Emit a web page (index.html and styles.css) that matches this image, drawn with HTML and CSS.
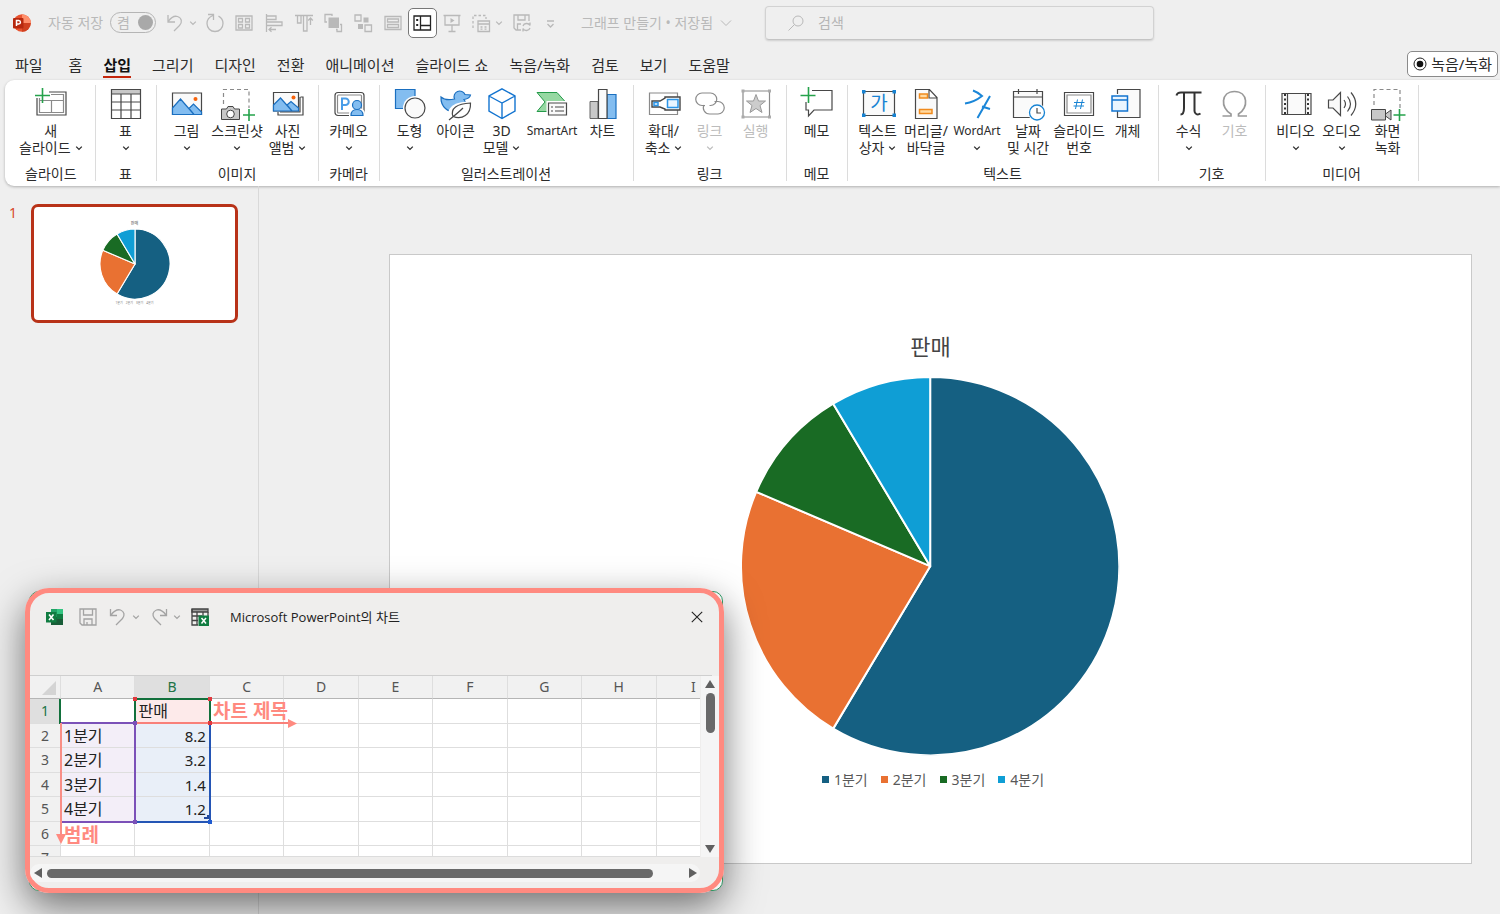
FILE: index.html
```html
<!DOCTYPE html>
<html lang="ko">
<head>
<meta charset="utf-8">
<meta name="viewport" content="width=device-width, initial-scale=1">
<title>그래프 만들기</title>
<link rel="stylesheet" href="styles.css">
</head>
<body>
<svg class="defs" aria-hidden="true">
  <symbol id="chev" viewBox="0 0 8 8"><path d="M1.2 2.6 4 5.4 6.800 2.600" fill="none" stroke="currentColor" stroke-width="1.3"/></symbol>
  <symbol id="pie" viewBox="-189 -189 378 378">
    <g stroke="#fff" stroke-linejoin="round">
      <path fill="#156082" d="M0 0V-189A189 189 0 1 1-96.900 162.300Z"/>
      <path fill="#e97132" d="M0 0-96.900 162.300A189 189 0 0 1-173.800-74.300Z"/>
      <path fill="#196b24" d="M0 0-173.800-74.300A189 189 0 0 1-96.900-162.300Z"/>
      <path fill="#0f9ed5" d="M0 0-96.900-162.300A189 189 0 0 1 0-189Z"/>
    </g>
  </symbol>
</svg>

<header class="titlebar">
  <svg class="app-logo" viewBox="0 0 20 20" aria-hidden="true">
    <circle cx="11" cy="10" r="8.800" fill="#e8532f"/><path d="M11 1.200A8.800 8.800 0 0 1 19.800 10H11Z" fill="#ff8f6b"/><path d="M11 18.800A8.800 8.800 0 0 0 19.800 10H11Z" fill="#d0401f"/>
    <rect x="2" y="5" width="10.500" height="10.500" rx="1" fill="#b7280e"/><path d="M5.500 13V7.400h2.200a1.700 1.700 0 0 1 0 3.500H5.800" fill="none" stroke="#fff" stroke-width="1.500"/>
  </svg>
  <span class="autosave" id="autosave">자동 저장</span>
  <button class="toggle" role="switch" aria-checked="true" aria-labelledby="autosave"><span>켬</span><i class="knob"></i></button>
  <div class="quick">
    <button class="qb" aria-label="실행 취소"><svg viewBox="0 0 20 20"><path d="M3 2v7h7M3.300 8.500C6 4.500 9 2.500 12.500 3.500c4.500 1.500 5 6 2 9L9 18"/></svg></button>
    <button class="qc" aria-label="실행 취소 목록"><svg viewBox="0 0 8 8"><use href="#chev"/></svg></button>
  </div>
  <div class="quick quick-main">
    <button class="qb" aria-label="다시 실행"><svg viewBox="0 0 20 20"><path d="M3 1.500h5.500V7M8 2.500C4 4 2 7 2 10.500c0 4.500 3.500 8 8 8s8-3.500 8-8c0-3.500-2-6-4.500-7.300"/></svg></button>
    <button class="qb" aria-label="표"><svg viewBox="0 0 20 20"><path d="M2 3h16v14H2zM4.500 5.500h4v3.500h-4zM11.500 5.500h4v3.500h-4zM4.500 11.500h4V15h-4zM11.500 11.500h4V15h-4z"/></svg></button>
    <button class="qb" aria-label="왼쪽 맞춤"><svg viewBox="0 0 20 20"><path d="M2.500 1v18M3 3h9v3.500H3M3 9h15v3.500H3M12 16.500H5m2.500-2.300L5 16.500l2.500 2.300"/></svg></button>
    <button class="qb" aria-label="위쪽 맞춤"><svg viewBox="0 0 20 20"><path d="M1 2.500h18M3.500 3v7h3.500V3M9.500 3v15h3.500V3M16.500 12V5m-2.300 2.500L16.500 5l2.300 2.500"/></svg></button>
    <button class="qb" aria-label="맨 앞으로"><svg viewBox="0 0 20 20"><path d="M9 3V1.500H2V9h2M13 16.500h1v2h4.500v-7H17"/><path class="f" d="M5.500 4.500h10.500v10.500H5.500z"/></svg></button>
    <button class="qb" aria-label="그룹"><svg viewBox="0 0 20 20"><path d="M2 2h6v6H2zM12 12h6.500v6.500H12z"/><path class="f" d="M10.500 4.500h5v5h-5zM5 11h5v5H5z"/></svg></button>
    <button class="qb" aria-label="레이아웃"><svg viewBox="0 0 20 20"><path d="M2 3.500h16v13H2z"/><path d="M4.500 6h11v3h-11zM4.500 11.500h11v3h-11z"/></svg></button>
    <button class="qb on" aria-label="기본 보기"><svg viewBox="0 0 20 20"><path d="M2 3h16.500v14H2zM8.500 3v14M8.500 12.500h10" /><path class="f" d="M4.200 6h2v2h-2zM4.200 11h2v2h-2z"/></svg></button>
  </div>
  <div class="quick">
    <button class="qb" aria-label="슬라이드 쇼"><svg viewBox="0 0 20 20"><path d="M1.500 2.500h17M3 3v9h14V3M10 12v6M6.500 18.500h7"/><path class="f" d="M8.500 5l4 2.500-4 2.500z"/></svg></button>
    <button class="qb" aria-label="선택 창"><svg viewBox="0 0 20 20"><path d="M2 15V2.500h13V6" stroke-dasharray="2.500 2"/><path d="M7 8h11.500v10.500H7zM7 11h11.500M9.500 14h2m2 0h2m-6 2.200h2m2 0h2"/></svg></button>
    <button class="qc" aria-label="선택 목록"><svg viewBox="0 0 8 8"><use href="#chev"/></svg></button>
    <button class="qb save" aria-label="저장"><svg viewBox="0 0 20 20"><path d="M9 17H4L2 15V2h15v6M6 2v5h7V2M5.500 17v-6H9M11 13c1-3 5.500-3.500 7-.5V9.500M18 15c-1 3-5.500 3.500-7 .5V18.500"/></svg></button>
    <button class="qb" aria-label="빠른 실행 도구 모음 사용자 지정"><svg viewBox="0 0 20 20"><path d="M6 8h7M6.500 11l3 3 3-3"/></svg></button>
  </div>
  <button class="doc-name">그래프 만들기 • 저장됨 <svg viewBox="0 0 12 12"><path d="M1 3.500 6 8.500 11 3.500" fill="none" stroke="currentColor"/></svg></button>
  <label class="search">
    <svg viewBox="0 0 18 18" aria-hidden="true"><circle cx="11" cy="7" r="5" fill="none" stroke="currentColor"/><path d="M7.500 10.500 1.500 16.500" stroke="currentColor"/></svg>
    <input type="search" placeholder="검색" aria-label="검색">
  </label>
</header>

<nav class="tabs">
  <button class="tab first">파일</button><button class="tab">홈</button><button class="tab active">삽입</button><button class="tab">그리기</button><button class="tab">디자인</button><button class="tab">전환</button><button class="tab">애니메이션</button><button class="tab">슬라이드 쇼</button><button class="tab">녹음/녹화</button><button class="tab">검토</button><button class="tab">보기</button><button class="tab">도움말</button>
  <button class="record"><svg viewBox="0 0 14 14" aria-hidden="true"><circle cx="7" cy="7" r="6" fill="none" stroke="#222"/><circle cx="7" cy="7" r="3.300" fill="#111"/></svg>녹음/녹화</button>
</nav>

<div class="ribbon">
  <section class="group"><div class="tools">
    <button class="tool"><svg viewBox="0 0 32 32"><path d="M2 10v17h29V4H14" class="k"/><path d="M4.500 10v14.500h24v-18H16M4.500 12.500h24M16.500 12.500v12" class="g"/><path d="M7.500 0v15M0 7.500h15" class="plus"/></svg><span>새</span><span>슬라이드 <svg class="c"><use href="#chev"/></svg></span></button>
  </div><h2>슬라이드</h2></section>

  <section class="group"><div class="tools">
    <button class="tool"><svg viewBox="0 0 32 32"><path d="M1.500 1.500h29V6h-29z" fill="#c8c8c8"/><path d="M1.500 1.500h29v29h-29zM1.500 6h29M11 6v24.500M21 6v24.500M1.500 14h29M1.500 22h29" class="k"/></svg><span>표</span><span><svg class="c"><use href="#chev"/></svg></span></button>
  </div><h2>표</h2></section>

  <section class="group"><div class="tools">
    <button class="tool"><svg viewBox="0 0 32 32"><path d="M1.500 5h29v21.500h-29z" class="k p"/><path d="M1.500 20 9.500 11 23 26.500H1.500zM18 20.500l4.500-4.500 8 8v2.500H23z" class="b"/><circle cx="24.500" cy="11" r="2" fill="#f7630c"/></svg><span>그림</span><span><svg class="c"><use href="#chev"/></svg></span></button>
    <button class="tool wide"><svg viewBox="0 0 32 32"><path d="M2.500 16V1.500H28V20" class="g" stroke-dasharray="4 3"/><path d="M.5 21h5l1.500-2.500h5L13.500 21H18.500v10.500H.5z" fill="#c8c8c8" stroke="#444"/><circle cx="9.500" cy="26" r="3.800" fill="#fff" stroke="#444"/><path d="M28 21v12M22 27h12" class="plus"/></svg><span>스크린샷</span><span><svg class="c"><use href="#chev"/></svg></span></button>
    <button class="tool"><svg viewBox="0 0 32 32"><path d="M6 24v3h25V9h-2.500M28 9v15H8" class="k"/><path d="M1.500 4.500h25v18.500h-25z" class="k p"/><path d="M1.500 17 8.500 10 20 23H1.500zM15 17l4-3.500 7.500 6.500v3H20z" class="b"/><circle cx="21.500" cy="9.500" r="2" fill="#f7630c"/></svg><span>사진</span><span>앨범 <svg class="c"><use href="#chev"/></svg></span></button>
  </div><h2>이미지</h2></section>

  <section class="group"><div class="tools">
    <button class="tool"><svg viewBox="0 0 32 32"><rect x="2" y="4.500" width="29" height="23" rx="3" class="k"/><rect x="4.500" y="7" width="24" height="18" rx="1" class="g"/><path d="M9 22V10.500h3.500a3.200 3.200 0 0 1 0 6.500H9" fill="none" stroke="#4a9de8" stroke-width="2"/><path d="M16 28v-2c0-5 4-6 8-6s8 1 8 6v2z" fill="#fff"/><path d="M18 27.500c0-5 3-6 6-6s6 1 6 6z" class="b"/><circle cx="24" cy="17" r="4.500" class="b"/></svg><span>카메오</span><span><svg class="c"><use href="#chev"/></svg></span></button>
  </div><h2>카메라</h2></section>

  <section class="group"><div class="tools">
    <button class="tool"><svg viewBox="0 0 32 32"><path d="M1.500 1.500h19.500v19H1.500z" class="b"/><circle cx="21" cy="20" r="12" fill="#fff"/><circle cx="21" cy="20" r="10" class="k p"/></svg><span>도형</span><span><svg class="c"><use href="#chev"/></svg></span></button>
    <button class="tool"><svg viewBox="0 0 32 32"><path d="M1 9c4 3.500 9 3 13.500 2A5.500 5.500 0 1 1 25 6.500l5.500.5c-.5 3-3 4-6.500 4.500 3 4 1 12-7 12.500C8 24.500.5 19 1 9Z" class="b"/><path d="M8 31C6 17 18 13 31.500 14 32 26 23 33 13 28z" fill="#fff"/><path d="M9 32c5-4 10-8 14-12M13 28.500c-3-8 4-13 17.500-13.500C31 27 22 32 13 28.500Z" class="k"/></svg><span>아이콘</span></button>
    <button class="tool"><svg viewBox="0 0 32 32"><path d="M16 .8 29 8v15L16 30.500 3 23V8zM3 8l13 7 13-7M16 15v15.500" fill="#fff" stroke="#1374d0" stroke-width="1.400"/></svg><span>3D</span><span>모델 <svg class="c"><use href="#chev"/></svg></span></button>
    <button class="tool wide"><svg viewBox="0 0 32 32"><path d="M1 4.500h20l8.500 9.500-9 9.500H1l8-9.500z" fill="#96d8a2" stroke="#249a4a"/><path d="M10.500 13H33v16H10.500z" fill="#fff"/><path d="M12.500 15h18v12h-18z" class="k p"/><path d="M15 19h2m2 0h9M15 23h2m2 0h9" class="k"/></svg><span class="latin">SmartArt</span></button>
    <button class="tool"><svg viewBox="0 0 32 32"><path d="M3 13.500h8v17H3z" fill="#c8c8c8" stroke="#666"/><path d="M20 6.500h9v24h-9z" class="b"/><path d="M11.500 1.500H20v29h-8.500z" class="k p"/></svg><span>차트</span></button>
  </div><h2>일러스트레이션</h2></section>

  <section class="group"><div class="tools">
    <button class="tool"><svg viewBox="0 0 32 32"><path d="M1.500 5h28v21.500h-28z" class="g"/><path d="M4 13h8l5-3V9h15v13H17v-1l-5-2H4z" fill="#fff" stroke="#444" stroke-width="1.400"/><path d="M6 14.500h4v3H6zM19.500 11.500H30v8H19.500z" fill="#eaf5ff" stroke="#2b95e8" stroke-width="1.500"/></svg><span>확대/</span><span>축소 <svg class="c"><use href="#chev"/></svg></span></button>
    <button class="tool off" disabled><svg viewBox="0 0 32 32"><path d="M11 17.500H8A6.200 6.200 0 0 1 8 5h8.500a6.200 6.200 0 0 1 0 12.500h-1M20.500 13.500H24A6.200 6.200 0 0 1 24 26h-8.500a6.200 6.200 0 0 1-5.500-9" class="g"/></svg><span>링크</span><span><svg class="c"><use href="#chev"/></svg></span></button>
    <button class="tool off" disabled><svg viewBox="0 0 32 32"><path d="M3 3h26.500v26H3z" class="g"/><path d="M1.500 1.500h3v3h-3zM28 1.500h3v3h-3zM1.500 27.500h3v3h-3zM28 27.500h3v3h-3z" fill="#aaa"/><path d="m16 6.500 2.500 6.500h7l-5.500 4.500 2 7-6-4-6 4 2-7L6.500 13h7z" fill="#ccc" stroke="#999"/></svg><span>실행</span></button>
  </div><h2>링크</h2></section>

  <section class="group"><div class="tools">
    <button class="tool"><svg viewBox="0 0 32 32"><path d="M11 2.500h20V22H13l-5.500 6v-6H5v-8" class="k"/><path d="M7.500-1v16M-.5 7.500h15" class="plus"/></svg><span>메모</span></button>
  </div><h2>메모</h2></section>

  <section class="group"><div class="tools">
    <button class="tool"><svg viewBox="0 0 32 32"><path d="M1.500 3.500h31v24h-31z" class="k p"/><path d="M0 2h3.500v3.500H0zM30.500 2H34v3.500h-3.500zM0 25.500h3.500V29H0zM30.500 25.500H34V29h-3.500z" fill="#1783d3"/><text x="17" y="22" text-anchor="middle" class="ga">가</text></svg><span>텍스트</span><span>상자 <svg class="c"><use href="#chev"/></svg></span></button>
    <button class="tool mid"><svg viewBox="0 0 32 32"><path d="M5.500 1.500h14l7.500 8v21H5.500zM19 1.500V10h8" class="k p"/><path d="M9.500 6h8v4h-8zM9.500 21.500H22v4H9.500z" fill="#ffd9a0" stroke="#f08a1d" stroke-width="1.500"/></svg><span>머리글/</span><span>바닥글</span></button>
    <button class="tool mid"><svg viewBox="0 0 32 32"><path d="M12 2.500c3 1 6 3 9 5.500C16 12 11 14.500 4 15.500M29 8 16.500 30M21 18.500l8 2.500" fill="none" stroke="#1a86d8" stroke-width="2"/></svg><span class="latin">WordArt</span><span><svg class="c"><use href="#chev"/></svg></span></button>
    <button class="tool mid"><svg viewBox="0 0 32 32"><path d="M1.500 3.500h29v26h-29zM1.500 9h29M6.500 1v5M25 1v5" class="k p"/><circle cx="25" cy="24.500" r="9" fill="#fff"/><circle cx="25" cy="24.500" r="7.500" fill="#fff" stroke="#1783d3" stroke-width="1.300"/><path d="M25 20v5h4" class="k"/></svg><span>날짜</span><span>및 시간</span></button>
    <button class="tool mid"><svg viewBox="0 0 32 32"><path d="M1.500 4.500h29v23h-29z" class="k"/><path d="M4 7h24v18H4z" class="g"/><path d="M14.500 11.500l-2 9.500M19.500 11.500l-2 9.500M11 14.500h10.500M10.500 18h10.500" stroke="#1783d3"/></svg><span>슬라이드</span><span>번호</span></button>
    <button class="tool"><svg viewBox="0 0 32 32"><path d="M5.500 6V1.500H28v28H5.500V23" class="k p"/><path d="M0 8h15.500v15H0zM0 12h15.500" fill="#eaf5ff" stroke="#1374d0" stroke-width="1.500"/></svg><span>개체</span></button>
  </div><h2>텍스트</h2></section>

  <section class="group"><div class="tools">
    <button class="tool"><svg viewBox="0 0 32 32"><path d="M3.500 7.500C4 5 6 4.500 8 4.500h20.500M11 4.500V20c0 4-1.500 6.500-3.500 6.500M21.500 4.500V23c0 3 3 4.500 6 2.500" fill="none" stroke="#333" stroke-width="2"/></svg><span>수식</span><span><svg class="c"><use href="#chev"/></svg></span></button>
    <button class="tool off" disabled><svg viewBox="0 0 32 32"><path d="M3.500 28H12v-2C1 20 2 3.500 15.500 3.500S30 20 19.500 26v2H28" fill="none" stroke="#999" stroke-width="1.700"/></svg><span>기호</span></button>
  </div><h2>기호</h2></section>

  <section class="group"><div class="tools">
    <button class="tool"><svg viewBox="0 0 32 32"><path d="M2 5.500h29v21H2zM7.500 5.500v21M25.500 5.500v21" class="k p"/><path d="M5 6v20M28 6v20" stroke="#333" stroke-width="2" stroke-dasharray="2 2.500"/></svg><span>비디오</span><span><svg class="c"><use href="#chev"/></svg></span></button>
    <button class="tool"><svg viewBox="0 0 32 32"><path d="M2.500 12H7l7.500-7.500v23L7 20H2.500z" class="k p"/><path d="M18 12q3 4 0 8M21.500 8.500q6 7.500 0 15M25 4.500q9.500 11.500 0 23" class="k"/></svg><span>오디오</span><span><svg class="c"><use href="#chev"/></svg></span></button>
    <button class="tool"><svg viewBox="0 0 32 32"><path d="M2 17V1.500h26V20" class="g" stroke-dasharray="4 3"/><path d="M-.5 21.500h14v10.500h-14zM13.500 26l5.500-4v10l-5.500-4z" fill="#c8c8c8" stroke="#444"/><path d="M27.500 21v12M21.500 27h12" class="plus"/></svg><span>화면</span><span>녹화</span></button>
  </div><h2>미디어</h2></section>
</div>

<main class="workspace">
  <aside class="thumbs">
    <span class="num">1</span>
    <div class="thumb">
      <span class="t-title">판매</span>
      <svg class="t-pie"><use href="#pie"/></svg>
      <span class="t-legend"><i>1분기</i><i>2분기</i><i>3분기</i><i>4분기</i></span>
    </div>
  </aside>
  <div class="canvas">
    <article class="slide">
      <h1>판매</h1>
      <svg class="pie" role="img" aria-label="판매 원형 차트"><use href="#pie"/></svg>
      <ul class="legend"><li class="s1">1분기</li><li class="s2">2분기</li><li class="s3">3분기</li><li class="s4">4분기</li></ul>
    </article>
  </div>

  <section class="window" aria-label="Microsoft PowerPoint의 차트">
   <div class="frame">
    <header class="win-head">
      <svg class="xl" viewBox="0 0 18 18" aria-hidden="true"><path d="M5 1h12v16H5z" fill="#185c37"/><path d="M5 1h6v8H5z" fill="#21a366"/><path d="M11 1h6v5h-6z" fill="#33c481"/><path d="M11 6h6v5h-6z" fill="#107c41"/><path d="M0 4h10.500v10.500H0z" fill="#107c41"/><path d="m3 6.500 4.500 5.500M7.500 6.500 3 12" stroke="#fff" stroke-width="1.600"/></svg>
      <button class="wb" aria-label="저장"><svg viewBox="0 0 18 18"><path d="M1 1h16v16H3l-2-2zM4.500 1v6h9V1M5 17v-6h8v6M8 17v-3"/></svg></button>
      <button class="wb" aria-label="실행 취소"><svg viewBox="0 0 18 18"><path d="M1.500 1v6.500H8M2 7c3-4 6-6 9.500-5 4 1.500 4.500 5.500 2 8.500L7 17"/></svg></button>
      <button class="wc" aria-label="실행 취소 목록"><svg><use href="#chev"/></svg></button>
      <button class="wb" aria-label="다시 실행"><svg viewBox="0 0 18 18"><path d="M16.500 1v6.500H10M16 7c-3-4-6-6-9.500-5C2.500 3.500 2 7.500 4.500 10.500L11 17"/></svg></button>
      <button class="wc" aria-label="다시 실행 목록"><svg><use href="#chev"/></svg></button>
      <button class="wb" aria-label="Microsoft Excel에서 데이터 편집"><svg viewBox="0 0 18 18"><path d="M1 1h16v3H1z" fill="#999" stroke="#444"/><path d="M1 1v16h6M6 4v13M12 4v4M17 4v4M1 8h10M1 12.500h6" stroke="#444"/><path d="M7.500 7.500H18V18H7.500z" fill="#107c41" stroke="none"/><path d="m10.500 10 4.500 5.500M15 10l-4.500 5.500" stroke="#fff" stroke-width="1.500"/></svg></button>
      <span class="win-title">Microsoft PowerPoint의 차트</span>
      <button class="close" aria-label="닫기"><svg viewBox="0 0 12 12"><path d="m.8.8 10.400 10.400M11.200.8.8 11.200" stroke="#222" stroke-width="1.100"/></svg></button>
    </header>
    <div class="sheet-row">
      <div class="sheet">
        <table>
          <colgroup><col class="rh"><col><col><col><col><col><col><col><col><col></colgroup>
          <thead><tr><th class="corner"></th><th>A</th><th class="sel">B</th><th>C</th><th>D</th><th>E</th><th>F</th><th>G</th><th>H</th><th>I</th></tr></thead>
          <tbody>
            <tr><th class="sel">1</th><td></td><td class="name">판매</td><td></td><td></td><td></td><td></td><td></td><td></td><td></td></tr>
            <tr><th>2</th><td class="cat">1분기</td><td class="val">8.2</td><td></td><td></td><td></td><td></td><td></td><td></td><td></td></tr>
            <tr><th>3</th><td class="cat">2분기</td><td class="val">3.2</td><td></td><td></td><td></td><td></td><td></td><td></td><td></td></tr>
            <tr><th>4</th><td class="cat">3분기</td><td class="val">1.4</td><td></td><td></td><td></td><td></td><td></td><td></td><td></td></tr>
            <tr><th>5</th><td class="cat">4분기</td><td class="val">1.2</td><td></td><td></td><td></td><td></td><td></td><td></td><td></td></tr>
            <tr><th>6</th><td></td><td></td><td></td><td></td><td></td><td></td><td></td><td></td><td></td></tr>
            <tr><th>7</th><td></td><td></td><td></td><td></td><td></td><td></td><td></td><td></td><td></td></tr>
          </tbody>
        </table>
        <svg class="marks" aria-hidden="true" fill="none" stroke-width="2">
          <path d="M12 19 26 5v14z" fill="#d4d4d4"/>
          <path d="M104 23h76M105 24v23M180 24v23M30 23v25" stroke="#12703c"/>
          <path d="M31 47h73M105 47v99M31 146h73" stroke="#7b51b8"/>
          <path d="M180 48v98M106 146h73" stroke="#2455b5"/>
          <path d="M107 47h153" stroke="#f98079"/><path d="M258 43v9l9-4.500z" fill="#ff8a80"/>
          <path d="M31 47v112" stroke="#f98d86"/><path d="M26 158h10l-5 10z" fill="#ff8a80"/>
          <path d="M178 45h4v4h-4zM178 21h4v4h-4zM103 21h4v4h-4z" fill="#e0393e"/>
          <path d="M103 45h4v4h-4zM103 144h4v4h-4z" fill="#7b51b8"/>
          <path d="M178 144h4v4h-4z" fill="#1f5bd0"/>
          <path d="M174 142h4v-3" stroke="#244a9c"/>
        </svg>
        <span class="note note-title">차트 제목</span>
        <span class="note note-legend">범례</span>
      </div>
      <div class="vbar"><svg viewBox="0 0 10 8"><path d="M5 0 10 8H0z"/></svg><i></i><svg class="down" viewBox="0 0 10 8"><path d="M0 0h10L5 8z"/></svg></div>
    </div>
    <div class="hbar"><svg viewBox="0 0 8 10"><path d="M8 0v10L0 5z"/></svg><i></i><svg class="right" viewBox="0 0 8 10"><path d="M0 0 8 5 0 10z"/></svg></div>
   </div>
  </section>
</main>
</body>
</html>
```

FILE: styles.css
```css
* { box-sizing: border-box; margin: 0; }
body {
  display: flex; flex-direction: column; min-height: 100vh; overflow: hidden;
  background: #efefef; color: #2b2b2b;
  font: 14px/17px "Noto Sans", "Noto Sans CJK KR", sans-serif;
}
button { padding: 0; border: 0; background: none; color: inherit; font: inherit; white-space: nowrap; }
svg { display: block; overflow: visible; }
.defs { position: absolute; width: 0; height: 0; }

/* Title bar */
.titlebar { display: flex; align-items: center; height: 45px; padding-left: 11px; color: #b9b9b9; }
.app-logo { width: 20px; height: 20px; flex: none; }
.autosave { margin-left: 17px; width: 62px; white-space: nowrap; }
.toggle {
  display: flex; align-items: center; justify-content: space-between; flex: none;
  width: 46px; height: 21px; padding: 0 2px 0 6px; border: 1px solid #b5b5b5; border-radius: 11px;
}
.knob { width: 15px; height: 15px; border-radius: 50%; background: #a9a9a9; }
.quick { display: flex; flex: none; margin-left: 4px; }
.quick-main { justify-content: space-between; width: 237px; margin-left: 3px; }
.quick-main + .quick { margin-left: 0; }
.qb { display: grid; place-items: center; width: 29px; height: 30px; border-radius: 5px; }
.qb svg { width: 20px; height: 20px; fill: none; stroke: currentColor; stroke-width: 1.3; }
.qb .f { fill: currentColor; stroke: none; }
.qb.on { background: #fff; color: #222; border: 1px solid #777; }
.qc { display: grid; place-items: center; width: 8px; }
.qc svg { width: 8px; height: 8px; }
.save { margin-left: 4px; }
.doc-name { display: flex; align-items: center; gap: 7px; margin-left: 16px; }
.doc-name svg { width: 12px; height: 12px; }
.search {
  display: flex; align-items: center; flex: 0 1 389px; height: 34px; margin-left: 33px; padding-left: 21px; gap: 11px;
  border: 1px solid #d2d2d2; border-bottom-color: #c4c4c4; border-radius: 4px; box-shadow: 0 1px 2px #0002;
}
.search svg { width: 18px; height: 18px; flex: none; }
.search input { flex: 1; min-width: 0; border: 0; outline: 0; background: none; font: inherit; color: #333; }
.search input::placeholder { color: #b5b5b5; }

/* Tabs */
.tabs { display: flex; align-items: flex-end; gap: 21px; height: 35px; padding: 0 2px 2px 15px; font-size: 15px; line-height: 22px; }
.tab { border-bottom: 2px solid transparent; }
.first { margin-right: 5px; }
.active { border-color: #c4260c; font-weight: 700; color: #111; }
.record {
  display: flex; align-items: center; gap: 4px; height: 26px; margin: 0 0 1px auto; padding: 0 5px;
  border: 1px solid #8a8a8a; border-radius: 5px; background: #fff;
}
.record svg { width: 14px; height: 14px; }

/* Ribbon */
.ribbon {
  display: flex; flex: none; position: relative; margin-left: 5px; padding: 5px 0;
  background: #fff; border-radius: 9px 0 0 9px; box-shadow: 0 1px 3px #0004;
}
.group { display: flex; flex-direction: column; justify-content: space-between; height: 96px; padding: 3px 7px 0; border-right: 1px solid #dcdcdc; }
.group:first-child { padding: 3px 18px 0 20px; }
.tools { display: flex; align-items: flex-start; justify-content: center; }
.group h2 { font-size: 14px; font-weight: 400; line-height: 15px; text-align: center; white-space: nowrap; }
.tool { display: flex; flex-direction: column; align-items: center; min-width: 46px; }
.tool.mid { width: 51px; }
.tool.wide { width: 55px; }
.tool > svg { width: 32px; height: 32px; margin-bottom: 2px; }
.tool span { display: flex; align-items: center; justify-content: center; gap: 4px; height: 17px; width: 0; }
.tool .latin { font-size: 12px; }
.tool .c { width: 8px; height: 8px; flex: none; }
.off { color: #bcbcbc; }
.k { fill: none; stroke: #484848; stroke-width: 1.2; }
.p { fill: #fafafa; }
.g { fill: none; stroke: #8a8a8a; stroke-width: 1.2; }
.b { fill: #83bdf0; stroke: #1a6fc0; stroke-width: 1.2; }
.plus { fill: none; stroke: #25a24b; stroke-width: 1.6; }
.ga { font-size: 19px; fill: #1783d3; }

/* Workspace */
.workspace { display: flex; flex: 1; position: relative; }
.thumbs { display: flex; align-items: flex-start; flex: none; width: 259px; padding: 18px 0 0 9px; border-right: 1px solid #d9d9d9; }
.num { width: 22px; color: #d8472b; }
.thumb { display: flex; flex-direction: column; align-items: center; width: 207px; height: 119px; padding-top: 13px; background: #fff; border: 3px solid #b83218; border-radius: 7px; }
.t-title { font-size: 4px; line-height: 8px; color: #555; }
.t-pie { width: 70px; height: 70px; margin-top: 1px; stroke-width: 6px; }
.t-legend { display: flex; gap: 3px; font-size: 3px; line-height: 7px; color: #777; margin-top: 1px; }
.t-legend i { font-style: normal; }
.canvas { flex: 1; padding: 68px 28px 50px 130px; }
.slide { display: flex; flex-direction: column; align-items: center; aspect-ratio: 1083 / 610; padding-top: 76px; background: #fff; border: 1px solid #c9c9c9; }
.slide h1 { font-size: 22px; line-height: 30px; font-weight: 400; color: #444; }
.pie { width: 35%; aspect-ratio: 1; margin-top: 16px; stroke-width: 2px; }
.legend { display: flex; gap: 13px; margin: 16px 0 0 5px; padding: 0; list-style: none; color: #595959; }
.legend li { display: flex; align-items: center; gap: 5px; }
.legend li::before { content: ""; width: 7px; height: 7px; }
.legend .s1::before { background: #156082; }
.legend .s2::before { background: #e97132; }
.legend .s3::before { background: #196b24; }
.legend .s4::before { background: #0f9ed5; }

/* Floating data window */
.window {
  position: absolute; left: 25px; bottom: 21px; z-index: 1; width: 699px;
  border-radius: 24px; box-shadow: 0 14px 38px #0008;
}
.window::before { content: ""; position: absolute; inset: 3px 1px 2px 4px; border: 1px solid #2f9563; border-radius: 10px; background: #f4f4f4; }
.frame { position: relative; border: 5px solid #ff8a80; border-radius: 24px; background: #efeeed; }
.win-head { display: flex; align-items: center; height: 83px; padding: 0 9px 34px 16px; margin-right: 7px; border-bottom: 1px solid #cfcfcf; color: #a3a3a3; }
.xl { width: 18px; height: 18px; margin-right: 15px; }
.wb svg { width: 18px; height: 18px; fill: none; stroke: currentColor; stroke-width: 1.3; }
.wb + .wb { margin-left: 12px; }
.wc { margin: 0 10px 0 5px; }
.wc svg { width: 8px; height: 8px; }
.win-title { margin-left: 21px; font-family: "Open Sans", "Noto Sans CJK KR", sans-serif; font-size: 13px; color: #222; }
.close { margin-left: auto; }
.close svg { width: 12px; height: 12px; }
.sheet-row { display: flex; height: 181px; }
.sheet { position: relative; flex: 1; overflow: hidden; border-bottom: 1px solid #dcdcdc; }
table { width: 701px; table-layout: fixed; border-collapse: separate; border-spacing: 0; background: #fff; }
.rh { width: 31px; }
th, td { height: 25px; padding: 0 3px; line-height: 20px; border: 0 solid #dedede; border-width: 0 1px 1px 0; white-space: nowrap; }
th { background: #f1f1f1; color: #555; font-weight: 400; text-align: center; }
thead th { height: 23px; border-bottom-color: #b5b5b5; }
tbody tr:nth-child(even) > * { height: 24px; }
th.sel { background: #dfdfdf; color: #217346; }
.name { background: #fdeaea; font-size: 16px; color: #222; }
.cat { background: #f3eef8; font-size: 16px; color: #222; }
.val { background: #e9eff8; font-size: 15px; text-align: right; color: #222; }
.marks { position: absolute; inset: 0; width: 100%; height: 100%; }
.note { position: absolute; font-size: 19px; line-height: 24px; font-weight: 700; color: #ff8a80; white-space: nowrap; }
.note-title { left: 183px; top: 23px; }
.note-legend { left: 34px; top: 147px; }
.vbar { display: flex; flex-direction: column; align-items: center; width: 18px; padding: 4px 0; margin-left: 1px; background: #f5f5f5; fill: #606060; }
.vbar svg { width: 10px; height: 8px; }
.vbar i { width: 9px; height: 40px; margin-top: 5px; border-radius: 5px; background: #696969; }
.down { margin-top: auto; }
.hbar { display: flex; align-items: center; height: 18px; margin: 7px 19px 6px 0; padding: 0 3px 0 4px; border-radius: 9px; background: #f5f5f5; fill: #606060; }
.hbar svg { width: 8px; height: 10px; flex: none; }
.hbar i { flex: 0 1 606px; height: 9px; margin-left: 5px; border-radius: 5px; background: #696969; }
.right { margin-left: auto; }
```
